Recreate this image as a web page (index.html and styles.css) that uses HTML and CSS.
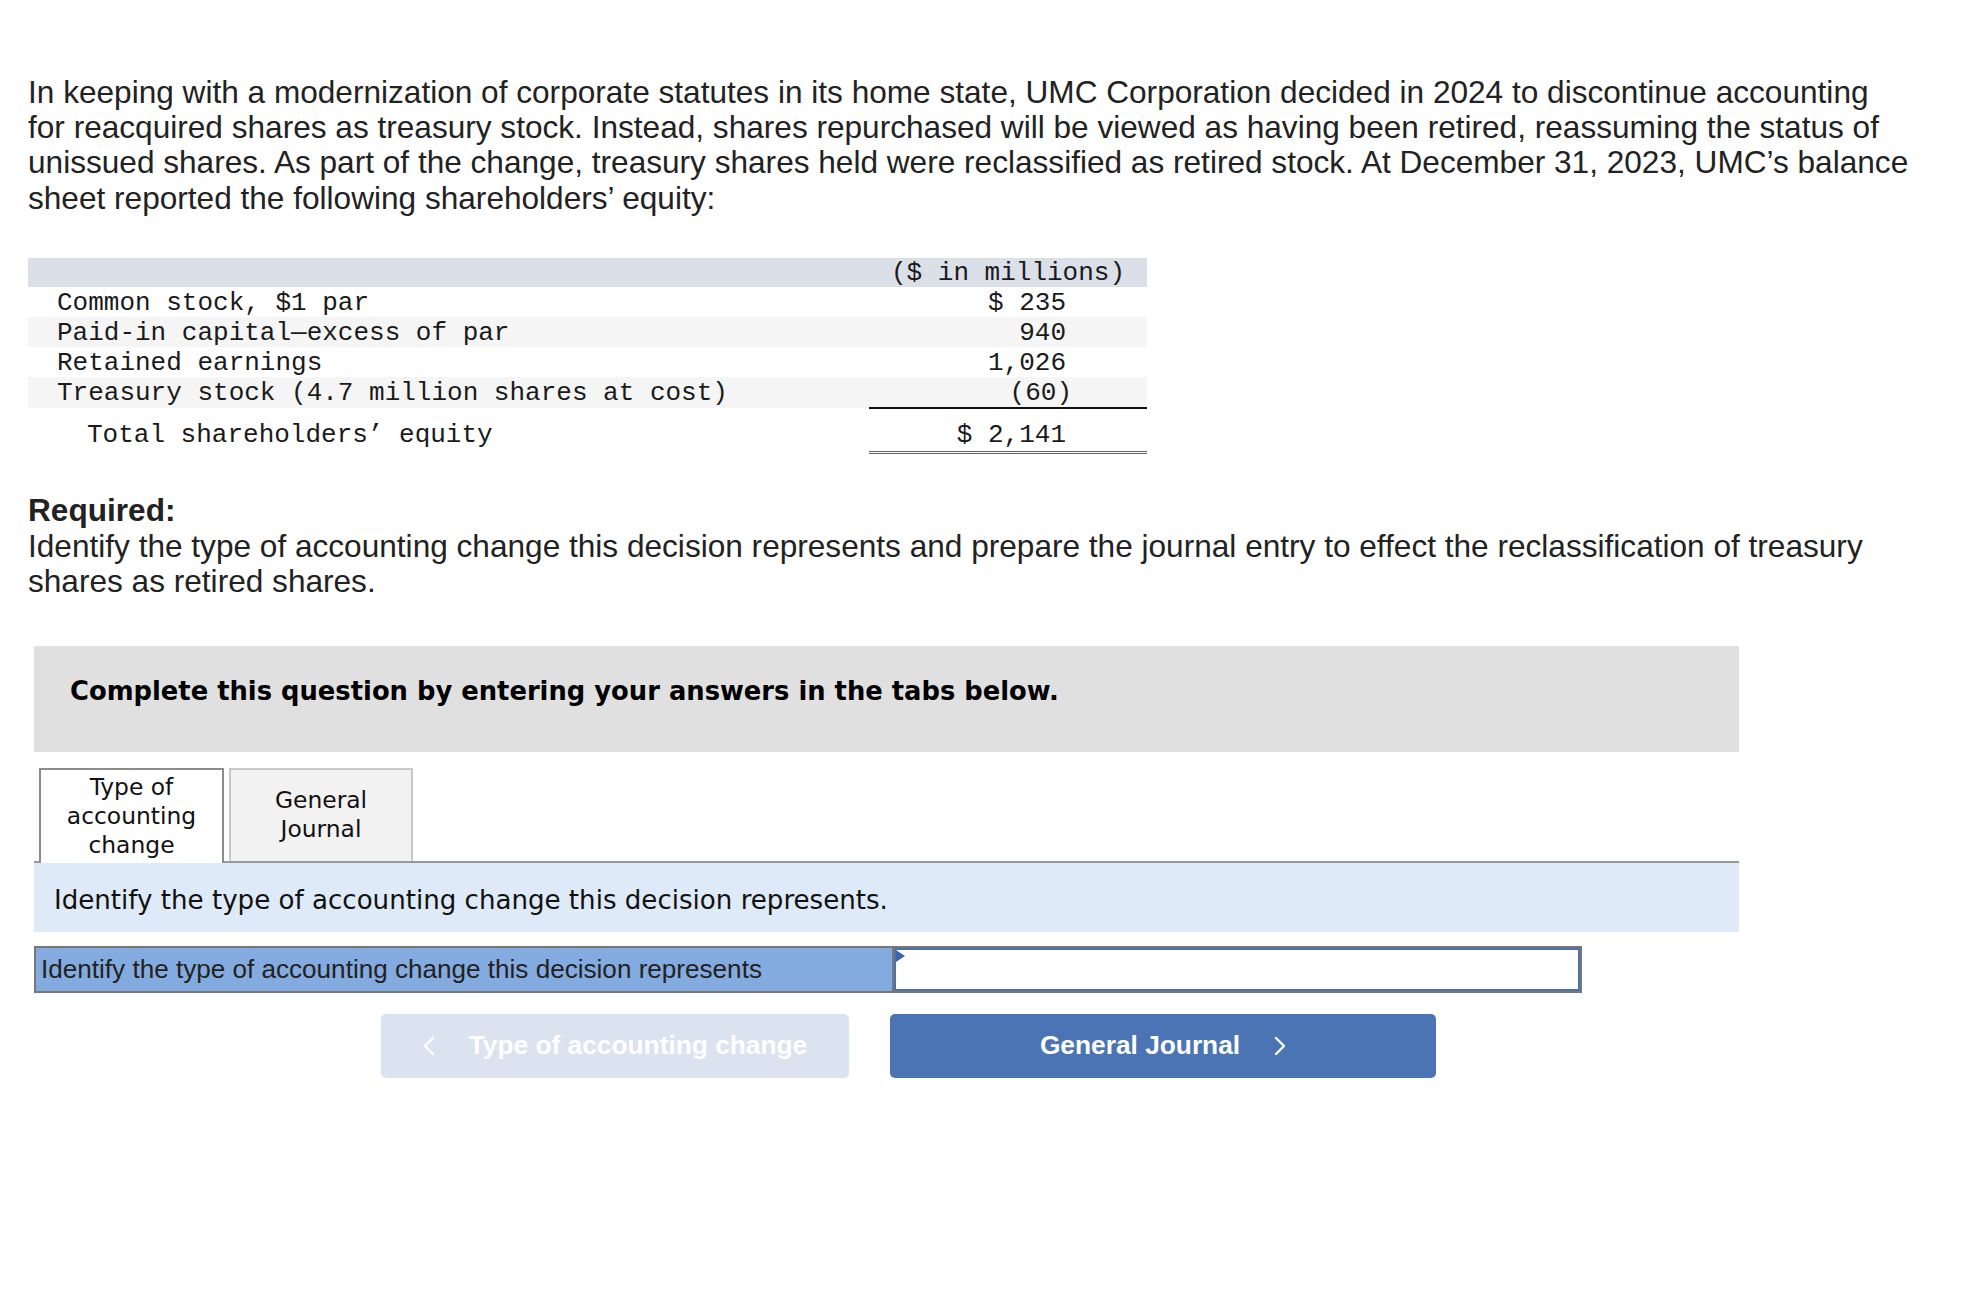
FILE: index.html
```html
<!DOCTYPE html>
<html lang="en">
<head>
<meta charset="utf-8">
<title>UMC Corporation – Accounting change</title>
<link rel="stylesheet" href="styles.css">
</head>
<body>
<div class="page">
  <p class="intro">In keeping with a modernization of corporate statutes in its home state, UMC Corporation decided in 2024 to discontinue accounting<br>for reacquired shares as treasury stock. Instead, shares repurchased will be viewed as having been retired, reassuming the status of<br>unissued shares. As part of the change, treasury shares held were reclassified as retired stock. At December 31, 2023, UMC’s balance<br>sheet reported the following shareholders’ equity:</p>

  <table class="equity">
    <colgroup><col class="c-label"><col class="c-num"></colgroup>
    <tr class="head"><th></th><th>($ in millions)</th></tr>
    <tr><td class="label">Common stock, $1 par</td><td class="num">$ 235</td></tr>
    <tr class="shade"><td class="label">Paid-in capital—excess of par</td><td class="num">940</td></tr>
    <tr><td class="label">Retained earnings</td><td class="num">1,026</td></tr>
    <tr class="shade"><td class="label">Treasury stock (4.7 million shares at cost)</td><td class="num paren rule">(60)</td></tr>
    <tr class="total"><td class="label indent">Total shareholders’ equity</td><td class="num dbl">$ 2,141</td></tr>
  </table>

  <div class="required">
    <strong>Required:</strong><br>
    Identify the type of accounting change this decision represents and prepare the journal entry to effect the reclassification of treasury<br>shares as retired shares.
  </div>

  <div class="task">
    <div class="banner">Complete this question by entering your answers in the tabs below.</div>
    <div class="tabs">
      <div class="tab active">Type of<br>accounting<br>change</div>
      <div class="tab">General<br>Journal</div>
    </div>
    <div class="prompt">Identify the type of accounting change this decision represents.</div>
    <div class="answer-row">
      <div class="answer-label">Identify the type of accounting change this decision represents</div>
      <div class="answer-input"><span class="marker"></span></div>
    </div>
    <div class="nav">
      <div class="btn prev">
        <svg class="chev" width="12" height="18" viewBox="0 0 12 18"><polyline points="10,1 2,9 10,17" fill="none" stroke="#fff" stroke-width="2.4" stroke-linecap="round" stroke-linejoin="round"/></svg>
        <span>Type of accounting change</span>
      </div>
      <div class="btn next">
        <span>General Journal</span>
        <svg class="chev" width="12" height="18" viewBox="0 0 12 18"><polyline points="2,1 10,9 2,17" fill="none" stroke="#fff" stroke-width="2.4" stroke-linecap="round" stroke-linejoin="round"/></svg>
      </div>
    </div>
  </div>
</div>
</body>
</html>
```

FILE: styles.css
```css
html, body {
  margin: 0;
  padding: 0;
  background: #ffffff;
}

body {
  color: #222222;
  font-family: "Liberation Sans", Arial, sans-serif;
}

.page {
  padding: 75px 0 0 28px;
}

.intro {
  margin: 0;
  font-size: 31.6px;
  line-height: 35.2px;
  white-space: nowrap;
}

/* Balance sheet table */
.equity {
  margin-top: 42px;
  width: 1119px;
  table-layout: fixed;
  border-collapse: collapse;
  font-family: "Liberation Mono", "Courier New", monospace;
  font-size: 26px;
  line-height: 27px;
  color: #1a1a1a;
}

.c-label { width: 841px; }
.c-num { width: 278px; }

.equity th,
.equity td {
  padding: 0;
  white-space: pre;
}

.equity .head th {
  background: #dadfe8;
  height: 29px;
  box-sizing: border-box;
  padding-top: 2px;
  font-weight: normal;
  text-align: center;
}

.equity td {
  height: 30px;
  box-sizing: border-box;
  padding-top: 3px;
}

.equity td.label {
  padding-left: 29px;
}

.equity td.indent {
  padding-left: 59px;
}

.equity td.num {
  text-align: right;
  padding-right: 81px;
}

.equity td.paren {
  padding-right: 75px;
}

.equity .shade td {
  background: #f5f5f5;
}

.equity td.rule {
  border-bottom: 2px solid #111111;
}

.equity .total td {
  height: 45px;
  padding-top: 11px;
}

.equity td.dbl {
  border-bottom: 3px double #666666;
}

/* Required */
.required {
  margin-top: 39px;
  font-size: 31.6px;
  line-height: 35.2px;
  white-space: nowrap;
}

.required strong {
  font-weight: bold;
}

/* Task area */
.task {
  margin: 47px 0 0 6px;
  width: 1705px;
}

.banner {
  background: #e0e0e0;
  height: 106px;
  box-sizing: border-box;
  padding: 30px 0 0 36px;
  font-family: "DejaVu Sans", Verdana, sans-serif;
  font-weight: bold;
  font-size: 25.8px;
  line-height: 30px;
  color: #000000;
}

.tabs {
  display: flex;
  align-items: flex-end;
  gap: 5px;
  padding-left: 5px;
  margin-top: 16px;
  border-bottom: 2px solid #999999;
}

.tab {
  width: 184px;
  height: 93px;
  box-sizing: border-box;
  border: 2px solid #c8c8c8;
  border-bottom: none;
  background: #f2f2f2;
  display: flex;
  align-items: center;
  justify-content: center;
  text-align: center;
  font-family: "DejaVu Sans", Verdana, sans-serif;
  font-size: 23.4px;
  line-height: 29px;
  color: #111111;
}

.tab.active {
  width: 185px;
  height: 95px;
  margin-bottom: -2px;
  background: #ffffff;
  border-color: #8c8c8c;
}

.prompt {
  background: #deeaf7;
  height: 69px;
  box-sizing: border-box;
  padding: 5px 0 0 20px;
  font-family: "DejaVu Sans", Verdana, sans-serif;
  font-size: 26.1px;
  line-height: 64px;
  color: #111111;
}

.answer-row {
  margin-top: 14px;
  width: 1548px;
  height: 47px;
  box-sizing: border-box;
  border: 2px solid #777777;
  display: grid;
  grid-template-columns: 858px 1fr;
}

.answer-label {
  background: #84abe0;
  border-right: 2px solid #777777;
  padding-left: 5px;
  font-size: 26.1px;
  line-height: 43px;
  color: #222222;
  white-space: nowrap;
}

.answer-input {
  position: relative;
  background: #ffffff;
  border: 2px solid #4a72b0;
}

.marker {
  position: absolute;
  top: 0;
  left: 0;
  width: 0;
  height: 0;
  border-left: 9px solid #3d65aa;
  border-top: 6.5px solid transparent;
  border-bottom: 6.5px solid transparent;
}

.nav {
  display: flex;
  gap: 41px;
  margin-top: 21px;
  padding-left: 347px;
}

.btn {
  height: 64px;
  border-radius: 5px;
  display: flex;
  align-items: center;
  justify-content: center;
  gap: 34px;
  font-family: "Liberation Sans", Arial, sans-serif;
  font-weight: bold;
  font-size: 26.3px;
  color: #ffffff;
}

.btn.prev {
  width: 468px;
  background: #dae3ef;
}

.btn.next {
  width: 546px;
  background: #4a74b3;
}

.chev {
  display: block;
}
```
